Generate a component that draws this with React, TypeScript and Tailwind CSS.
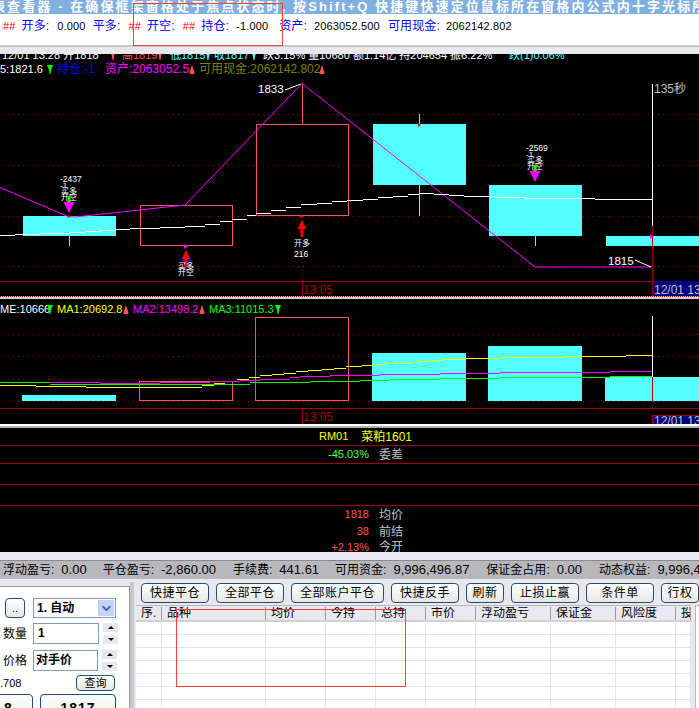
import type { ReactNode } from 'react';
import { ChevronDown } from 'lucide-react';

const RED = '#ff5454';
const CYAN = '#54ffff';
const DARK = '#a80000';

// the moving averages are drawn by the terminal as little horizontal steps
function stairs(pts: number[][], step = 12) {
  const out: string[] = [];
  for (let i = 0; i < pts.length - 1; i++) {
    const [x1, y1] = pts[i];
    const [x2, y2] = pts[i + 1];
    for (let x = x1; x < x2; x += step) {
      const y = Math.round(y1 + ((y2 - y1) * (x - x1)) / (x2 - x1)) + 0.5;
      out.push(`M${x} ${y}H${Math.min(x + step, x2)}`);
    }
  }
  return out.join('');
}

// arrow marks next to the indicator values
function Up({ x, y, c = RED }: { x: number; y: number; c?: string }) {
  return <polygon points={`${x + 2},${y - 9} ${x + 4},${y - 3} ${x + 4.5},${y} ${x - 0.5},${y} ${x},${y - 3}`} fill={c} />;
}
function Down({ x, y, c = '#00ff00' }: { x: number; y: number; c?: string }) {
  return <polygon points={`${x - 1},${y - 9} ${x + 5},${y - 9} ${x + 3},${y - 4} ${x + 2.5},${y} ${x + 1.5},${y} ${x + 1},${y - 4}`} fill={c} />;
}

function T({ x, y, c = '#fff', size = 11, anchor, children }: { x: number; y: number; c?: string; size?: number; anchor?: 'end' | 'middle'; children: ReactNode }) {
  return <text x={x} y={y} fill={c} fontSize={size} textAnchor={anchor}>{children}</text>;
}

function Dotted({ ys, from = 3 }: { ys: number[]; from?: number }) {
  return (
    <>
      {ys.map((y) => (
        <line key={y} x1={from} x2={699} y1={y} y2={y} stroke={DARK} strokeDasharray="1 4" />
      ))}
    </>
  );
}

function Box({ x, y, w, h }: { x: number; y: number; w: number; h: number }) {
  return <rect x={x} y={y} width={w} height={h} fill="none" stroke={RED} />;
}

function SignalDown({ x, top, pnl }: { x: number; top: number; pnl: string }) {
  return (
    <g>
      <T x={x - 9} y={top} size={8.5}>{pnl}</T>
      <T x={x - 9} y={top + 6} size={8}>-1</T>
      <T x={x - 8} y={top + 12} size={8}>买多</T>
      <T x={x - 8} y={top + 18} size={8}>开空</T>
      <rect x={x - 1.5} y={top + 14} width={3} height={6} fill="#00ff00" />
      <polygon points={`${x - 5.5},${top + 20} ${x + 5.5},${top + 20} ${x},${top + 31}`} fill="#ff00ff" />
    </g>
  );
}

function SignalUp({ x, tip }: { x: number; tip: number }) {
  return (
    <g>
      <polygon points={`${x},${tip} ${x + 4.5},${tip + 9} ${x - 4.5},${tip + 9}`} fill="#ff0000" />
      <rect x={x - 1.5} y={tip + 9} width={3} height={8} fill="#ff0000" />
    </g>
  );
}

function PriceChart() {
  const white = [[0, 235], [40, 233], [70, 232], [115, 229], [170, 227], [190, 226], [232, 219], [256, 213], [302, 204], [348, 200], [419, 193], [466, 196], [535, 198], [652, 199]];
  return (
    <svg viewBox="0 54 699 242" className="block h-[242px] w-[699px] bg-black">
      <T x={2} y={59} size={11}>12/01 13:28 开1818</T>
      <Down x={111} y={60} c={RED} />
      <T x={122} y={59} c={RED}>高1819</T>
      <Down x={158} y={60} c={RED} />
      <T x={170} y={59} c={CYAN}>低1815</T>
      <Down x={206} y={60} c={CYAN} />
      <T x={214} y={59} c={CYAN}>收1817</T>
      <Down x={252} y={60} c={CYAN} />
      <T x={263} y={59}>跌3.15% 量10680 额1.14亿 持204654 振6.22%</T>
      <T x={509} y={59} c={CYAN}>跌(1)0.06%</T>

      <T x={0} y={73}>5:1821.6</T>
      <Down x={48} y={74} />
      <T x={57} y={73} c="#0000ff" size={12}>持仓:-1</T>
      <T x={105} y={73} c="#ff00ff" size={12}>资产:2063052.5</T>
      <Up x={190} y={74} />
      <T x={199} y={73} c="#808000" size={12}>可用现金:2062142.802</T>
      <Up x={320} y={74} />

      <Dotted ys={[114.5, 165.5, 216.5, 266.5]} />
      <line x1={0} x2={699} y1={281.5} y2={281.5} stroke={DARK} />

      <rect x={23} y={216} width={93} height={20} fill={CYAN} />
      <line x1={69.5} x2={69.5} y1={236} y2={246} stroke={CYAN} />
      <rect x={373} y={124} width={93} height={61} fill={CYAN} />
      <line x1={419.5} x2={419.5} y1={114} y2={216} stroke={CYAN} />
      <rect x={489} y={185} width={93} height={51} fill={CYAN} />
      <line x1={535.5} x2={535.5} y1={236} y2={246} stroke={CYAN} />
      <rect x={606} y={236} width={93} height={10} fill={CYAN} />
      <Box x={140.5} y={205.5} w={92} h={40} />
      <Box x={256.5} y={124.5} w={92} h={91} />
      <line x1={302.5} x2={302.5} y1={84} y2={124} stroke={RED} />

      <polyline points="0,187.5 68,216.5 75,217 185,205 302,83.5 535,267 652,267" fill="none" stroke="#ff00ff" />
      <path d={stairs(white, 15)} fill="none" stroke="#fff" shapeRendering="crispEdges" />

      <line x1={652.5} x2={652.5} y1={84} y2={226} stroke="#fff" />
      <line x1={652.5} x2={652.5} y1={226} y2={296} stroke={DARK} />
      <line x1={302.5} x2={302.5} y1={250} y2={281} stroke={DARK} strokeDasharray="1 3" />
      <line x1={302.5} x2={302.5} y1={281} y2={296} stroke={DARK} />

      <T x={258} y={93} size={11.5}>1833</T>
      <line x1={285} x2={301} y1={90} y2={84} stroke="#fff" />
      <T x={608} y={265} size={11.5}>1815</T>
      <line x1={635} x2={651} y1={260} y2={267} stroke="#fff" />
      <T x={654} y={93} c="#c0c0c0" size={12}>135秒</T>

      <SignalDown x={69} top={182} pnl="-2437" />
      <SignalDown x={535} top={151} pnl="-2569" />
      <polygon points="68,215 71,216.5 68,218" fill="#ff0000" />
      <polygon points="418,123 421,125 418,127" fill="#ff0000" />
      <polygon points="650,234 653,236.5 650,239" fill="#ff00ff" />
      <polygon points="184,244 188,246.5 184,249" fill="#ff00ff" />
      <polygon points="300,215 305,216.5 300,218" fill="#ff0000" />

      <SignalUp x={186} tip={250} />
      <rect x={181} y={259} width={11} height={2} fill="#0000ff" />
      <rect x={184.5} y={259} width={3} height={8} fill="#ff0000" />
      <T x={178} y={269} size={8}>买多</T>
      <T x={178} y={275} size={8}>开空</T>
      <SignalUp x={302} tip={220} />
      <T x={294} y={246} size={8}>开多</T>
      <T x={294} y={257} size={8.5}>216</T>

      <T x={303} y={294} c={DARK} size={12}>13:05</T>
      <rect x={652} y={281} width={47} height={15} fill="#000080" />
      <line x1={652.5} x2={652.5} y1={281} y2={296} stroke={DARK} />
      <T x={654} y={294} c="#c0c0c0" size={12}>12/01 13</T>
    </svg>
  );
}

function VolumeChart() {
  const yellow = [[0, 385], [50, 386], [100, 387], [190, 387], [225, 381], [260, 375], [310, 370], [350, 366], [419, 361], [466, 358], [530, 357], [590, 356], [652, 355]];
  const magenta = [[0, 382], [40, 382], [130, 383], [210, 381], [260, 379], [300, 376], [350, 375], [440, 373], [520, 372], [652, 371]];
  const green = [[0, 382], [50, 384], [200, 384], [260, 382], [310, 381], [390, 379], [450, 378], [510, 377], [652, 376]];
  return (
    <svg viewBox="0 299 699 125" className="block h-[125px] w-[699px] bg-black">
      <T x={0} y={313}>ME:10666</T>
      <Down x={48} y={314} />
      <T x={57} y={313} c="#ffff00">MA1:20692.8</T>
      <Up x={124} y={314} />
      <T x={133} y={313} c="#ff00ff">MA2:13498.2</T>
      <Up x={200} y={314} />
      <T x={209} y={313} c="#00ff00">MA3:11015.3</T>
      <Down x={276} y={314} />

      <Dotted ys={[334.5, 356.5, 379.5, 401.5]} />
      <line x1={0} x2={699} y1={408.5} y2={408.5} stroke={DARK} />

      <rect x={22} y={395} width={94} height={6} fill={CYAN} />
      <rect x={372} y={353} width={94} height={48} fill={CYAN} />
      <rect x={488} y={346} width={94} height={55} fill={CYAN} />
      <rect x={605} y={377} width={94} height={24} fill={CYAN} />
      <Box x={139.5} y={381.5} w={93} h={19} />
      <Box x={255.5} y={317.5} w={93} h={83} />

      <path d={stairs(yellow)} fill="none" stroke="#ffff00" shapeRendering="crispEdges" />
      <path d={stairs(magenta, 30)} fill="none" stroke="#ff00ff" shapeRendering="crispEdges" />
      <path d={stairs(green, 50)} fill="none" stroke="#00ff00" shapeRendering="crispEdges" />

      <line x1={652.5} x2={652.5} y1={316} y2={377} stroke="#fff" />
      <line x1={652.5} x2={652.5} y1={377} y2={402} stroke={DARK} />
      <line x1={302.5} x2={302.5} y1={408} y2={424} stroke={DARK} />
      <T x={303} y={421} c={DARK} size={12}>13:05</T>
      <rect x={652.5} y={415.5} width={47} height={9} fill="#000080" stroke={DARK} />
      <T x={654} y={425} c="#c0c0c0" size={12}>12/01 13</T>
    </svg>
  );
}

function QuoteRow({ value, label, color, h = 'h-[17px]' }: { value: string; label: string; color: string; h?: string }) {
  return (
    <div className={`flex items-center ${h}`}>
      <div className={`w-[369px] text-right text-[11px] ${color}`}>{value}</div>
      <div className="ml-[10px] text-[12px] text-[#c0c0c0]">{label}</div>
    </div>
  );
}

function QuotePanel() {
  return (
    <div className="h-[124px] overflow-hidden bg-black">
      <div className="flex h-[18px] items-center border-b border-[#a80000] pl-[319px] text-[11px] text-[#ffff00]">
        RM01<span className="ml-[13px] text-[12px]">菜粕1601</span>
      </div>
      <div className="h-[18px] border-b border-[#a80000]">
        <QuoteRow value="-45.03%" label="委差" color="text-[#54ff54]" />
      </div>
      <div className="h-[21px] border-b border-[#a80000]" />
      <div className="h-[21px] border-b border-[#a80000]" />
      <QuoteRow value="1818" label="均价" color="text-[#ff5454]" />
      <QuoteRow value="38" label="前结" color="text-[#ff5454]" />
      <QuoteRow value="+2.13%" label="今开" color="text-[#ff5454]" h="h-[14px]" />
    </div>
  );
}

function Stat({ label, value, gap }: { label: string; value: string; gap: string }) {
  return (
    <div className={`flex shrink-0 items-center whitespace-nowrap ${gap}`}>
      <span className="text-[12px]">{label}:</span>
      <span className="ml-[7px] text-[13px]">{value}</span>
    </div>
  );
}

function Spinner() {
  return (
    <div className="ml-[4px] flex w-[15px] flex-col gap-[3px]">
      <div className="flex h-[9px] items-center justify-center bg-[#e8e8ec]">
        <div className="h-0 w-0 border-x-[3px] border-b-[3px] border-x-transparent border-b-black" />
      </div>
      <div className="flex h-[9px] items-center justify-center bg-[#e8e8ec]">
        <div className="h-0 w-0 border-x-[3px] border-t-[3px] border-x-transparent border-t-black" />
      </div>
    </div>
  );
}

const btnClass = 'flex shrink-0 justify-center rounded-[4px] border-[1.5px] border-[#1f4e79] bg-gradient-to-b from-white to-[#e6e6e2] text-black';

function OrderPanel() {
  return (
    <div className="mt-[4px] flex w-[130px] shrink-0 flex-col border-r border-t border-[#9a9a9e] bg-white pt-[11px]">
      <div className="flex h-[20px] items-center">
        <div className={`${btnClass} ml-[5px] h-[20px] w-[20px] items-center text-[11px]`}>..</div>
        <div className="ml-[8px] flex h-[20px] w-[83px] items-center justify-between border border-[#7f9db9] pl-[3px] text-[12px] font-bold">
          1. 自动
          <div className="m-px flex h-[16px] w-[16px] items-center justify-center bg-[#c1d2fc] text-[#4d6185]">
            <ChevronDown size={13} strokeWidth={3.5} />
          </div>
        </div>
      </div>
      <div className="mt-[5px] flex h-[21px] items-center">
        <div className="ml-[3px] w-[30px] text-[12px] leading-none">数量</div>
        <div className="h-[21px] w-[66px] border border-[#7f9db9] pl-[4px] text-[12px] font-bold">1</div>
        <Spinner />
      </div>
      <div className="mt-[6px] flex h-[21px] items-center">
        <div className="ml-[3px] w-[30px] text-[12px] leading-none">价格</div>
        <div className="h-[21px] w-[65px] border border-[#7f9db9] pl-[2px] text-[12px] font-bold">对手价</div>
        <Spinner />
      </div>
      <div className="mt-[4px] flex h-[16px] items-center justify-between pr-[14px] text-[11px]">
        <span>.708</span>
        <div className={`${btnClass} h-[16px] w-[39px] items-center text-[11px]`}>查询</div>
      </div>
      <div className="mt-[3px] flex gap-[7px]">
        <div className={`${btnClass} ml-[-9px] h-[30px] w-[42px] items-start pr-[8px] pt-[3px] text-[14px] font-bold text-[#ff0000]`}>8</div>
        <div className={`${btnClass} h-[30px] w-[76px] items-start pt-[3px] text-[14px] font-bold tracking-[1px] text-[#008000]`}>1817</div>
      </div>
    </div>
  );
}

const BUTTONS = [
  { label: '快捷平仓', w: 'w-[68px]' },
  { label: '全部平仓', w: 'w-[68px]' },
  { label: '全部账户平仓', w: 'w-[93px]' },
  { label: '快捷反手', w: 'w-[68px]' },
  { label: '刷新', w: 'w-[38px]' },
  { label: '止损止赢', w: 'w-[68px]' },
  { label: '条件单', w: 'w-[68px]' },
  { label: '行权', w: 'w-[38px]' },
];

const COLUMNS = [
  { label: '序.', w: 'w-[26px]' },
  { label: '品种', w: 'w-[104px]' },
  { label: '均价', w: 'w-[60px]' },
  { label: '今持', w: 'w-[50px]' },
  { label: '总持', w: 'w-[50px]' },
  { label: '市价', w: 'w-[50px]' },
  { label: '浮动盈亏', w: 'w-[75px]' },
  { label: '保证金', w: 'w-[65px]' },
  { label: '风险度', w: 'w-[60px]' },
  { label: '投', w: 'w-[15px]' },
];

function PositionTable() {
  return (
    <div className="flex-1 overflow-hidden bg-[#e8e8ee] pt-[1px]">
      <div className="flex gap-[7px] pl-[7px]">
        {BUTTONS.map((b) => (
          <div key={b.label} className={`${btnClass} h-[20px] items-center text-[12px] tracking-[0.5px] ${b.w}`}>{b.label}</div>
        ))}
      </div>
      <div className="ml-[2px] mt-[2px] flex">
        <div className="w-[555px] border-t border-[#b8b8bc] bg-white">
          <div className="flex h-[16px] items-center border-b-2 border-[#d0d0d6] bg-[#e8e8ee]">
            {COLUMNS.map((c) => (
              <div key={c.label} className={`h-[13px] overflow-hidden whitespace-nowrap border-r border-[#9a9a9e] pl-[5px] text-[12px] leading-[13px] ${c.w}`}>{c.label}</div>
            ))}
          </div>
          {[0, 1, 2, 3, 4, 5, 6].map((r) => (
            <div key={r} className="flex h-[13px] border-b border-[#e4e4e8]">
              {COLUMNS.map((c) => (
                <div key={c.label} className={`border-r border-[#e4e4e8] ${c.w}`} />
              ))}
            </div>
          ))}
        </div>
        <div className="ml-[4px] w-[5px] border-l border-t border-[#b8b8bc] bg-white" />
      </div>
    </div>
  );
}

export default function App() {
  return (
    <div className="relative h-[708px] w-[699px] overflow-hidden bg-[#e8e8ee] font-['Liberation_Sans','Noto_Sans_CJK_SC',sans-serif] text-black">
      <div className="flex h-[14px] items-center overflow-hidden whitespace-nowrap bg-[#7fb0e0] text-[13px] font-bold tracking-[2.1px] text-white">
        <span className="ml-[-8px]">表查看器 - 在确保框架窗格处于焦点状态时, 按Shift+Q 快捷键快速定位鼠标所在窗格内公式内十字光标所</span>
      </div>
      <div className="flex h-[31px] items-start whitespace-nowrap bg-white pt-[4px] text-[11px] leading-[16px] tracking-[0.15px]">
        <span className="ml-[3px] text-[#ff0000]">##</span>
        <span className="ml-[6px] text-[12px] text-[#0000ff]">开多:</span>
        <span className="ml-[8px]">0.000</span>
        <span className="ml-[7px] text-[12px] text-[#0000ff]">平多:</span>
        <span className="ml-[8px] text-[#ff0000]">##</span>
        <span className="ml-[6px] text-[12px] text-[#0000ff]">开空:</span>
        <span className="ml-[8px] text-[#ff0000]">##</span>
        <span className="ml-[6px] text-[12px] text-[#0000ff]">持仓:</span>
        <span className="ml-[7px]">-1.000</span>
        <span className="ml-[11px] text-[12px] text-[#0000ff]">资产:</span>
        <span className="ml-[7px]">2063052.500</span>
        <span className="ml-[8px] text-[12px] text-[#0000ff]">可用现金:</span>
        <span className="ml-[6px]">2062142.802</span>
      </div>
      <div className="h-[2px] bg-[#c8c8cc]" />
      <div className="h-[7px]" />
      <PriceChart />
      <div className="h-[3px] border-t border-dotted border-[#a80000] bg-[#d0d0d0]" />
      <VolumeChart />
      <div className="h-[4px] border-t-2 border-white bg-[#b0b0b0]" />
      <QuotePanel />
      <div className="h-[8px]" />
      <div className="flex h-[19px] items-center overflow-hidden whitespace-nowrap border-t border-[#8a8a8e] bg-[#b8b8bc] pl-[3px]">
        <Stat label="浮动盈亏" value="0.00" gap="" />
        <Stat label="平仓盈亏" value="-2,860.00" gap="ml-[16px]" />
        <Stat label="手续费" value="441.61" gap="ml-[17px]" />
        <Stat label="可用资金" value="9,996,496.87" gap="ml-[16px]" />
        <Stat label="保证金占用" value="0.00" gap="ml-[17px]" />
        <Stat label="动态权益" value="9,996,496.87" gap="ml-[17px]" />
      </div>
      <div className="flex h-[130px] overflow-hidden pt-[3px]">
        <OrderPanel />
        <div className="w-[4px] shrink-0 bg-[#c8c8cc]" />
        <PositionTable />
      </div>

      {/* red selection rectangles lying over the window */}
      <div className="absolute left-[133px] top-[3px] h-[43px] w-[150px] border border-[#ff3c3c]" />
      <div className="absolute left-[176px] top-[609px] h-[78px] w-[230px] border border-[#ff3c3c]" />
    </div>
  );
}
